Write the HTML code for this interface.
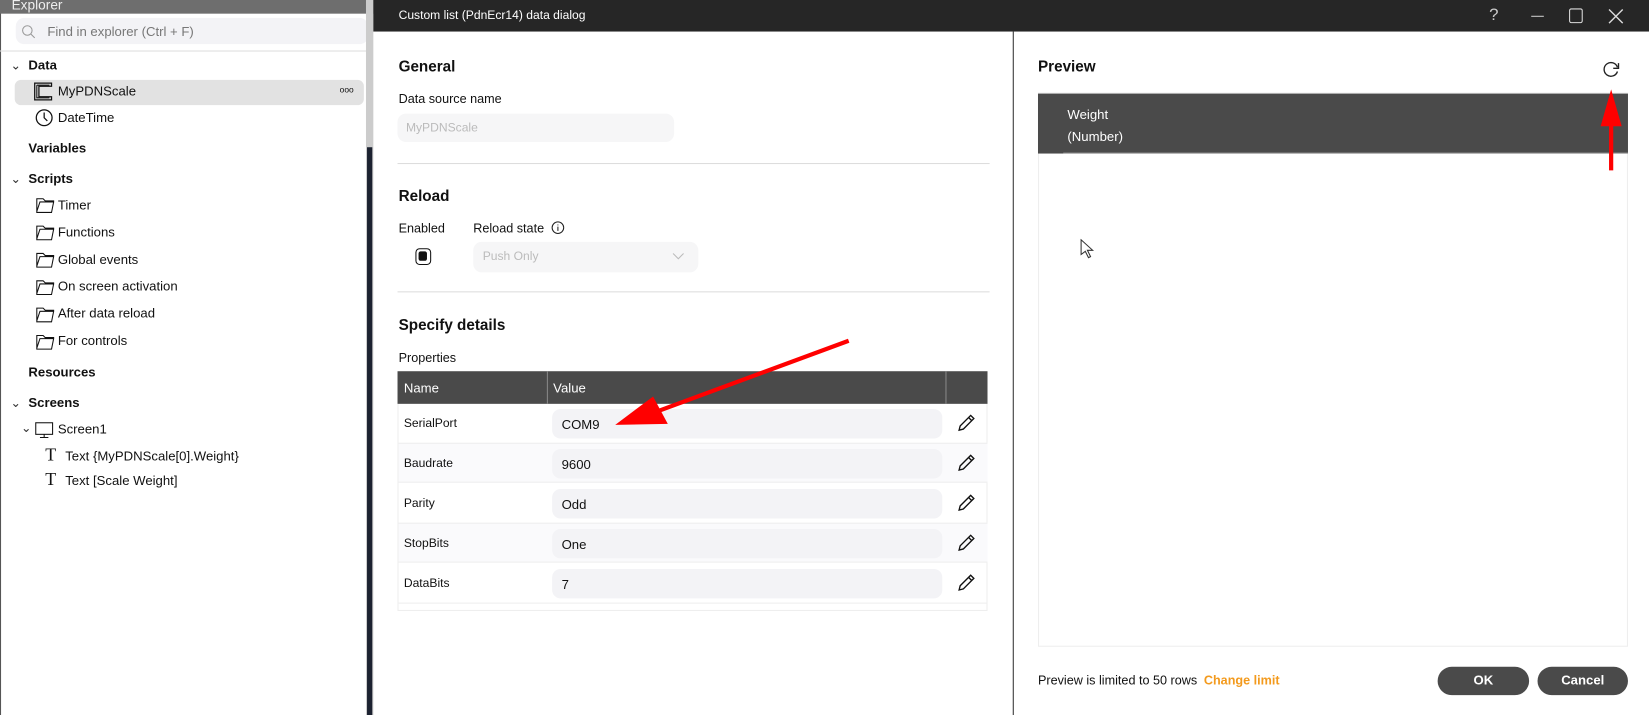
<!DOCTYPE html>
<html><head><meta charset="utf-8"><style>
*{box-sizing:border-box;margin:0;padding:0}
body{width:1649px;height:715px;overflow:hidden;background:#fff;font-family:"Liberation Sans",sans-serif;color:#111;position:relative;font-size:13px}
#w{position:absolute;left:0;top:0;width:1568px;height:680px;transform:scale(1.05166);transform-origin:0 0}
.abs{position:absolute}
.b{font-weight:bold}
</style></head><body><div id="w">
<!-- Left explorer -->
<div class="abs" style="left:0;top:0;width:355px;height:680px;background:#fff;border-left:1px solid #555"></div>
<div class="abs" style="left:0;top:0;width:355px;height:13px;background:#6e6e6e;color:#eee;font-size:13px;line-height:9px;padding-left:11px;overflow:hidden">Explorer</div>
<div class="abs" style="left:15px;top:17px;width:335px;height:25px;background:#f3f3f6;border-radius:8px"></div>
<svg class="abs" style="left:20px;top:23px" width="14" height="14"><circle cx="6" cy="6" r="4.5" fill="none" stroke="#999" stroke-width="1"/><line x1="9.3" y1="9.3" x2="13" y2="13" stroke="#999"/></svg>
<div class="abs" style="left:45px;top:23px;color:#777;font-size:12.5px">Find in explorer (Ctrl + F)</div>
<div class="abs" style="left:0;top:48px;width:348px;height:1px;background:#ddd"></div>
<div class="abs" style="left:348px;top:0;width:7px;height:680px;background:#ccc"></div>
<div class="abs" style="left:349px;top:140px;width:5px;height:540px;background:#1c2230"></div>

<div class="abs" style="left:10px;top:55px;font-size:12px;color:#333">&#8964;</div>
<div class="abs b" style="left:27px;top:55px;font-size:12.5px">Data</div>
<div class="abs" style="left:14px;top:76px;width:332px;height:24px;background:#e2e2e2;border-radius:6px"></div>
<svg class="abs" style="left:32px;top:78px" width="20" height="20"><path d="M1 1h16v3H5v10h12v3H1z" fill="none" stroke="#111" stroke-width="1.2"/><path d="M3 3h12M3 3v12h12" fill="none" stroke="#111" stroke-width="1"/></svg>
<div class="abs" style="left:55px;top:80px;font-size:12.5px">MyPDNScale</div>
<div class="abs" style="left:323px;top:81px;font-size:8px;letter-spacing:0px">ooo</div>
<svg class="abs" style="left:33px;top:103px" width="18" height="18"><circle cx="9" cy="9" r="7.5" fill="none" stroke="#111" stroke-width="1.2"/><path d="M9 4v5l3 3" fill="none" stroke="#111" stroke-width="1.2"/></svg>
<div class="abs" style="left:55px;top:105px;font-size:12.5px">DateTime</div>
<div class="abs b" style="left:27px;top:134px;font-size:12.5px">Variables</div>
<div class="abs" style="left:10px;top:163px;font-size:12px;color:#333">&#8964;</div>
<div class="abs b" style="left:27px;top:163px;font-size:12.5px">Scripts</div>

<svg class="abs" style="left:33px;top:186px" width="20" height="160">
<g fill="none" stroke="#111" stroke-width="1">
<path d="M2 3h6l2 2h8v1H5l-3 9z M2 3v13h14l2-10"/>
<path transform="translate(0,26)" d="M2 3h6l2 2h8v1H5l-3 9z M2 3v13h14l2-10"/>
<path transform="translate(0,52)" d="M2 3h6l2 2h8v1H5l-3 9z M2 3v13h14l2-10"/>
<path transform="translate(0,78)" d="M2 3h6l2 2h8v1H5l-3 9z M2 3v13h14l2-10"/>
<path transform="translate(0,104)" d="M2 3h6l2 2h8v1H5l-3 9z M2 3v13h14l2-10"/>
<path transform="translate(0,130)" d="M2 3h6l2 2h8v1H5l-3 9z M2 3v13h14l2-10"/>
</g></svg>
<div style="font-size:12.5px">
<div class="abs" style="left:55px;top:188px">Timer</div>
<div class="abs" style="left:55px;top:214px">Functions</div>
<div class="abs" style="left:55px;top:240px">Global events</div>
<div class="abs" style="left:55px;top:265px">On screen activation</div>
<div class="abs" style="left:55px;top:291px">After data reload</div>
<div class="abs" style="left:55px;top:317px">For controls</div>
<div class="abs b" style="left:27px;top:347px">Resources</div>
<div class="abs" style="left:10px;top:376px;font-size:12px;color:#333">&#8964;</div>
<div class="abs b" style="left:27px;top:376px">Screens</div>
<div class="abs" style="left:20px;top:400px;font-size:12px;color:#333">&#8964;</div>
<svg class="abs" style="left:33px;top:400px" width="18" height="18"><rect x="1" y="2" width="16" height="11" fill="none" stroke="#111" stroke-width="1"/><path d="M9 13v3M5 16h8" stroke="#111"/></svg>
<div class="abs" style="left:55px;top:401px">Screen1</div>
<div class="abs" style="left:43px;top:423px;font-size:17px;font-family:'Liberation Serif',serif;font-weight:normal">T</div>
<div class="abs" style="left:62px;top:427px">Text {MyPDNScale[0].Weight}</div>
<div class="abs" style="left:43px;top:446px;font-size:17px;font-family:'Liberation Serif',serif">T</div>
<div class="abs" style="left:62px;top:450px">Text [Scale Weight]</div>
</div>

<!-- Dialog -->
<div class="abs" style="left:355px;top:0;width:1213px;height:30px;background:#262626"></div>
<div class="abs" style="left:379px;top:9px;color:#fff;font-size:11.5px">Custom list (PdnEcr14) data dialog</div>
<div class="abs" style="left:1416px;top:6px;color:#ccc;font-size:16px">?</div>
<div class="abs" style="left:1456px;top:15px;width:12px;height:1px;background:#ccc"></div>
<div class="abs" style="left:1492px;top:8px;width:13px;height:14px;border:1.3px solid #ddd;border-radius:2px"></div>
<svg class="abs" style="left:1529px;top:8px" width="15" height="15"><path d="M1 1l13 13M14 1L1 14" stroke="#ddd" stroke-width="1.3"/></svg>
<div class="abs" style="left:963px;top:30px;width:1px;height:650px;background:#333"></div>

<div class="abs b" style="left:379px;top:56px;font-size:14.5px">General</div>
<div class="abs" style="left:379px;top:87px;font-size:12px">Data source name</div>
<div class="abs" style="left:378px;top:108px;width:263px;height:27px;background:#f6f6f7;border-radius:8px;color:#bbb;padding:8px 0 0 8px;font-size:11.5px">MyPDNScale</div>
<div class="abs" style="left:378px;top:155px;width:563px;height:1px;background:#ddd"></div>
<div class="abs b" style="left:379px;top:179px;font-size:14.5px">Reload</div>
<div class="abs" style="left:379px;top:210px;font-size:12px">Enabled</div>
<div class="abs" style="left:450px;top:210px;font-size:12px">Reload state</div>
<svg class="abs" style="left:524px;top:210px" width="13" height="13"><circle cx="6.5" cy="6.5" r="5.5" fill="none" stroke="#222"/><path d="M6.5 5.5v4M6.5 3.5v.8" stroke="#222"/></svg>
<div class="abs" style="left:395px;top:236px;width:15px;height:16px;border:1.5px solid #111;border-radius:4px;background:#fff"><div style="margin:2px;width:8px;height:9px;background:#111;border-radius:2px"></div></div>
<div class="abs" style="left:450px;top:230px;width:214px;height:29px;background:#f6f6f7;border-radius:8px;color:#bbb;padding:8px 0 0 9px;font-size:11.5px">Push Only</div>
<svg class="abs" style="left:639px;top:240px" width="12" height="8"><path d="M1 1l5 5 5-5" fill="none" stroke="#bbb"/></svg>
<div class="abs" style="left:378px;top:277px;width:563px;height:1px;background:#ddd"></div>
<div class="abs b" style="left:379px;top:302px;font-size:14.5px">Specify details</div>
<div class="abs" style="left:379px;top:333px;font-size:12px">Properties</div>

<div class="abs" style="left:378px;top:353px;width:561px;height:228px;border:1px solid #eee"></div>
<div class="abs" style="left:378px;top:353px;width:561px;height:31px;background:#4a4a4a"></div>
<div class="abs" style="left:520px;top:353px;width:1px;height:31px;background:#888"></div>
<div class="abs" style="left:899px;top:353px;width:1px;height:31px;background:#888"></div>
<div class="abs" style="left:384px;top:362px;color:#fff;font-size:12.5px">Name</div>
<div class="abs" style="left:526px;top:362px;color:#fff;font-size:12.5px">Value</div>

<div class="abs" style="left:379px;top:421px;width:560px;height:38px;background:#fafafc;border-top:1px solid #eee;border-bottom:1px solid #eee"></div>
<div class="abs" style="left:379px;top:497px;width:560px;height:38px;background:#fafafc;border-top:1px solid #eee;border-bottom:1px solid #eee"></div>
<div class="abs" style="left:379px;top:573px;width:560px;height:1px;background:#eee"></div>

<div style="font-size:11.5px">
<div class="abs" style="left:384px;top:397px">SerialPort</div>
<div class="abs" style="left:384px;top:435px">Baudrate</div>
<div class="abs" style="left:384px;top:473px">Parity</div>
<div class="abs" style="left:384px;top:511px">StopBits</div>
<div class="abs" style="left:384px;top:549px">DataBits</div>
</div>

<div class="abs" style="left:525px;top:389px;width:371px;height:28px;background:#f3f3f6;border-radius:8px;padding:8px 0 0 9px;font-size:12.5px">COM9</div>
<div class="abs" style="left:525px;top:427px;width:371px;height:28px;background:#f3f3f6;border-radius:8px;padding:8px 0 0 9px;font-size:12.5px">9600</div>
<div class="abs" style="left:525px;top:465px;width:371px;height:28px;background:#f3f3f6;border-radius:8px;padding:8px 0 0 9px;font-size:12.5px">Odd</div>
<div class="abs" style="left:525px;top:503px;width:371px;height:28px;background:#f3f3f6;border-radius:8px;padding:8px 0 0 9px;font-size:12.5px">One</div>
<div class="abs" style="left:525px;top:541px;width:371px;height:28px;background:#f3f3f6;border-radius:8px;padding:8px 0 0 9px;font-size:12.5px">7</div>

<svg class="abs" style="left:909px;top:392px" width="20" height="180"><g fill="none" stroke="#111" stroke-width="1.3">
<path d="M3 17l1-4L14 3l3 3L7 16z M12 5l3 3"/>
<path transform="translate(0,38)" d="M3 17l1-4L14 3l3 3L7 16z M12 5l3 3"/>
<path transform="translate(0,76)" d="M3 17l1-4L14 3l3 3L7 16z M12 5l3 3"/>
<path transform="translate(0,114)" d="M3 17l1-4L14 3l3 3L7 16z M12 5l3 3"/>
<path transform="translate(0,152)" d="M3 17l1-4L14 3l3 3L7 16z M12 5l3 3"/>
</g></svg>

<!-- Preview -->
<div class="abs b" style="left:987px;top:56px;font-size:14.5px">Preview</div>
<svg class="abs" style="left:1523px;top:56px" width="20" height="20"><path d="M15 8A6.5 6.5 0 1 0 15 12" fill="none" stroke="#222" stroke-width="1.3"/><path d="M16 4v5h-5" fill="none" stroke="#222" stroke-width="1.3"/></svg>
<div class="abs" style="left:987px;top:88px;width:561px;height:527px;border:1px solid #eee"></div>
<div class="abs" style="left:987px;top:89px;width:561px;height:57px;background:#4a4a4a"></div>
<div class="abs" style="left:1011px;top:145px;width:537px;height:1px;background:#888"></div>
<div class="abs" style="left:1015px;top:99px;color:#fff;font-size:12.5px;line-height:21px">Weight<br>(Number)</div>
<svg class="abs" style="left:1027px;top:227px" width="14" height="20"><path d="M1 1v14l4-3 3 6 2-1-3-6h5z" fill="#fff" stroke="#333"/></svg>

<div class="abs" style="left:987px;top:640px;font-size:12px">Preview is limited to 50 rows <span style="color:#f39a1d;font-weight:bold;margin-left:3px">Change limit</span></div>
<div class="abs b" style="left:1367px;top:634px;width:87px;height:27px;background:#4a4a4a;border-radius:14px;color:#fff;text-align:center;line-height:27px;font-size:12.5px">OK</div>
<div class="abs b" style="left:1462px;top:634px;width:86px;height:27px;background:#4a4a4a;border-radius:14px;color:#fff;text-align:center;line-height:27px;font-size:12.5px">Cancel</div>

<!-- Red arrows -->
<svg class="abs" style="left:0;top:0" width="1568" height="680">
<line x1="807" y1="324" x2="620" y2="393" stroke="#f00" stroke-width="4"/>
<polygon points="585,404 621,377 635,403" fill="#f00"/>
<line x1="1532" y1="162" x2="1532" y2="115" stroke="#f00" stroke-width="4"/>
<polygon points="1532,85 1522,120 1542,120" fill="#f00"/>
</svg>
</div></body></html>
